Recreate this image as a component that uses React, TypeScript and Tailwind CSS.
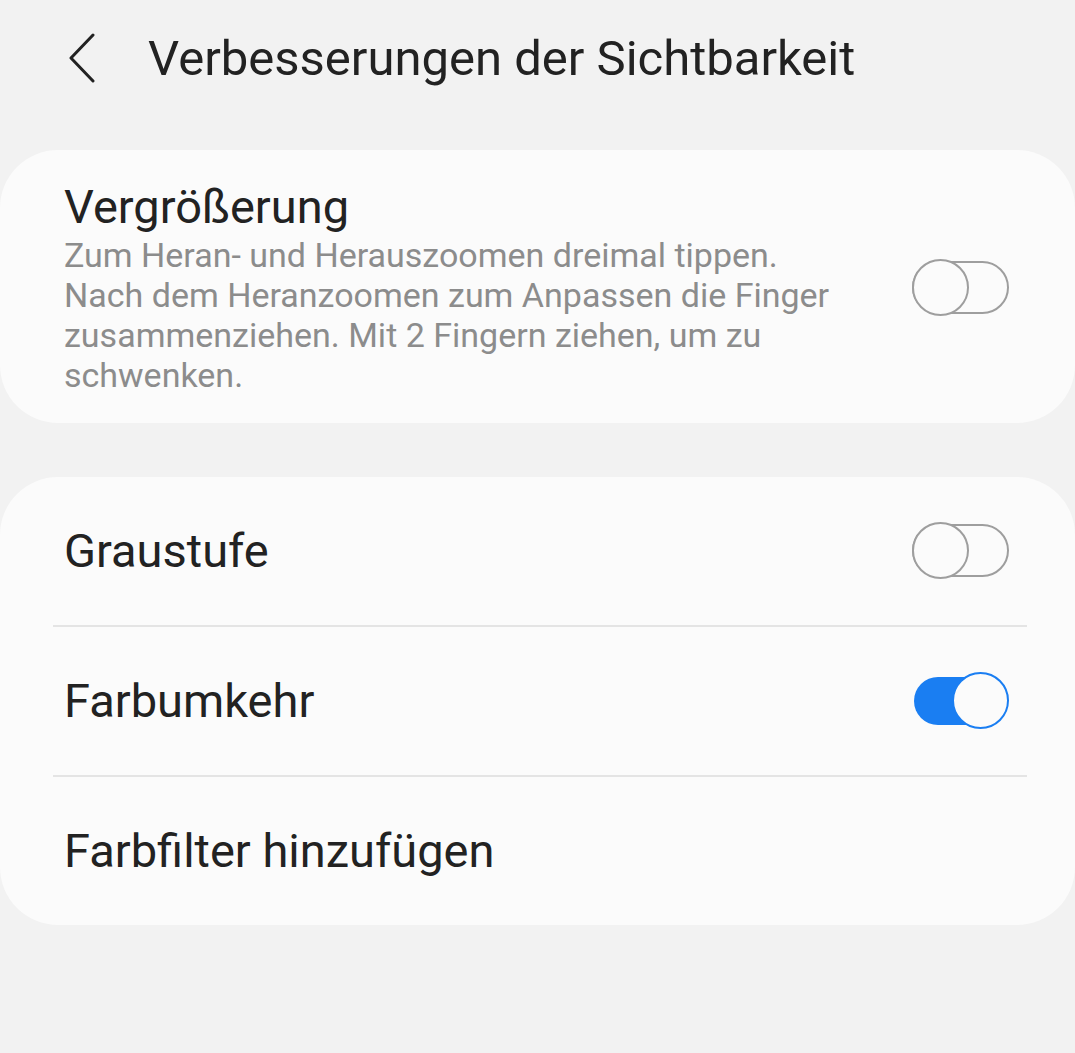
import React from 'react';

function Toggle({ on }: { on: boolean }) {
  if (on) {
    return (
      <div className="relative w-[97px] h-[58px] shrink-0">
        <div className="absolute left-[2px] right-[8px] top-[5px] h-[48px] rounded-full bg-[#1a7ef2]" />
        <div className="absolute right-0 top-0 w-[57px] h-[57px] rounded-full border-[2.5px] border-[#1a7ef2] bg-[#fbfbfb]" />
      </div>
    );
  }
  return (
    <div className="relative w-[97px] h-[58px] shrink-0">
      <div className="absolute left-0 right-0 top-[2px] h-[53px] rounded-full border-[2.5px] border-[#9e9e9e]" />
      <div className="absolute left-0 top-0 w-[57px] h-[57px] rounded-full border-[2.5px] border-[#9e9e9e] bg-[#fbfbfb]" />
    </div>
  );
}

function Row({ label, toggle }: { label: string; toggle?: boolean }) {
  return (
    <div className="flex items-center justify-between h-[148px] pl-[64px] pr-[66px]">
      <span className="text-[47px] leading-[54px] text-[#222222]">{label}</span>
      {toggle !== undefined && <Toggle on={toggle} />}
    </div>
  );
}

export default function App() {
  return (
    <div
      className="min-h-screen bg-[#f2f2f2] pb-[130px]"
      style={{ fontFamily: 'Roboto, "Noto Sans", sans-serif' }}
    >
      <header className="flex items-center h-[118px] pl-[68px]">
        <svg width="30" height="52" viewBox="0 0 30 52" className="shrink-0">
          <path d="M25 2 L3 25 L25 48" fill="none" stroke="#222" strokeWidth="3" strokeLinecap="round" strokeLinejoin="round" />
        </svg>
        <h1 className="ml-[50px] text-[49px] leading-[56px] text-[#222222]">Verbesserungen der Sichtbarkeit</h1>
      </header>

      <div className="mt-[32px] bg-[#fbfbfb] rounded-[58px] flex items-center pl-[64px] pr-[66px] pt-[30px] pb-[28px]">
        <div className="flex-1">
          <div className="text-[47px] leading-[54px] text-[#222222]">Vergrößerung</div>
          <p className="mt-[1px] text-[34px] leading-[40px] text-[#8c8c8c] max-w-[785px]">
            Zum Heran- und Herauszoomen dreimal tippen. Nach dem Heranzoomen zum Anpassen die Finger zusammenziehen. Mit 2 Fingern ziehen, um zu schwenken.
          </p>
        </div>
        <Toggle on={false} />
      </div>

      <div className="mt-[54px] bg-[#fbfbfb] rounded-[58px]">
        <Row label="Graustufe" toggle={false} />
        <div className="ml-[53px] mr-[48px] h-[2px] bg-[#e4e4e4]" />
        <Row label="Farbumkehr" toggle={true} />
        <div className="ml-[53px] mr-[48px] h-[2px] bg-[#e4e4e4]" />
        <Row label="Farbfilter hinzufügen" />
      </div>
    </div>
  );
}
